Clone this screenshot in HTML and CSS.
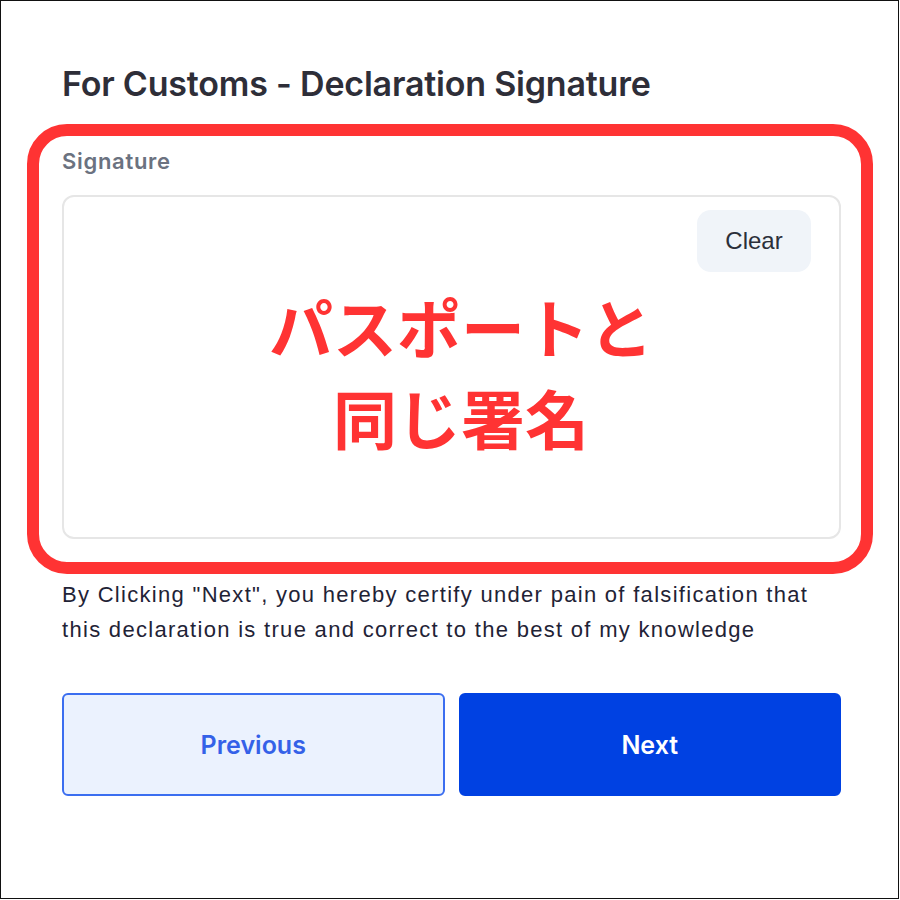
FILE: index.html
```html
<!DOCTYPE html>
<html lang="en">
<head>
<meta charset="utf-8">
<link rel="stylesheet" href="styles.css">
</head>
<body>
<div class="frame">
  <div class="content">
    <h1 class="title">For Customs - Declaration Signature</h1>
    <div class="label">Signature</div>
    <div class="sigbox">
      <button class="clear">Clear</button>
    </div>
    <p class="notice">By Clicking "Next", you hereby certify under pain of falsification that this declaration is true and correct to the best of my knowledge</p>
    <div class="actions">
      <button class="btn prev">Previous</button>
      <button class="btn next">Next</button>
    </div>
  </div>
  <div class="annot-box"></div>
  <div class="annot-text">パスポートと<br>同じ署名</div>
</div>
</body>
</html>
```

FILE: styles.css
```css
html, body {
  margin: 0;
  padding: 0;
  background: #fff;
}
.frame {
  position: relative;
  width: 899px;
  height: 899px;
  box-sizing: border-box;
  border: 1px solid #111;
  background: #fff;
  overflow: hidden;
}
.content {
  padding: 63px 57px 0 61px;
  display: flex;
  flex-direction: column;
}
.title {
  margin: 0;
  font-family: Inter, "Noto Sans", sans-serif;
  font-weight: 600;
  font-size: 34px;
  line-height: 40px;
  color: #2e2e38;
  letter-spacing: -0.2px;
}
.label {
  margin-top: 44px;
  font-family: Inter, "Noto Sans", sans-serif;
  font-weight: 600;
  font-size: 22px;
  line-height: 26px;
  letter-spacing: 0.7px;
  color: #6b7280;
}
.sigbox {
  margin-top: 21px;
  height: 344px;
  box-sizing: border-box;
  border: 2px solid #e6e6e6;
  border-radius: 12px;
  display: flex;
  justify-content: flex-end;
  align-items: flex-start;
  padding: 13px 28px 0 0;
}
.clear {
  width: 114px;
  height: 62px;
  border: none;
  border-radius: 14px;
  background: #f0f4f9;
  font-family: "Liberation Sans", Arial, sans-serif;
  font-size: 24px;
  color: #2b2f3a;
  padding: 0;
}
.notice {
  margin: 38px 0 0;
  font-family: "Liberation Sans", Arial, sans-serif;
  font-size: 22px;
  line-height: 35px;
  letter-spacing: 1.3px;
  color: #1f2336;
}
.actions {
  margin-top: 46px;
  display: grid;
  grid-template-columns: 1fr 1fr;
  gap: 14px;
}
.btn {
  height: 103px;
  border-radius: 6px;
  font-family: Inter, "Noto Sans", sans-serif;
  font-weight: 600;
  font-size: 25px;
  box-sizing: border-box;
  padding: 0;
}
.prev {
  background: #ebf2fe;
  border: 2px solid #3b6ef0;
  color: #3461e8;
}
.next {
  background: #0041e2;
  border: 2px solid #0041e2;
  color: #fff;
}
.annot-box {
  position: absolute;
  left: 26px;
  top: 123px;
  width: 846px;
  height: 450px;
  box-sizing: border-box;
  border: 12px solid #ff3333;
  border-radius: 40px;
}
.annot-text {
  position: absolute;
  left: 160px;
  width: 600px;
  top: 279px;
  text-align: center;
  font-family: "Noto Sans CJK JP", sans-serif;
  font-weight: 700;
  font-size: 64px;
  line-height: 91px;
  color: #ff3333;
}
```
